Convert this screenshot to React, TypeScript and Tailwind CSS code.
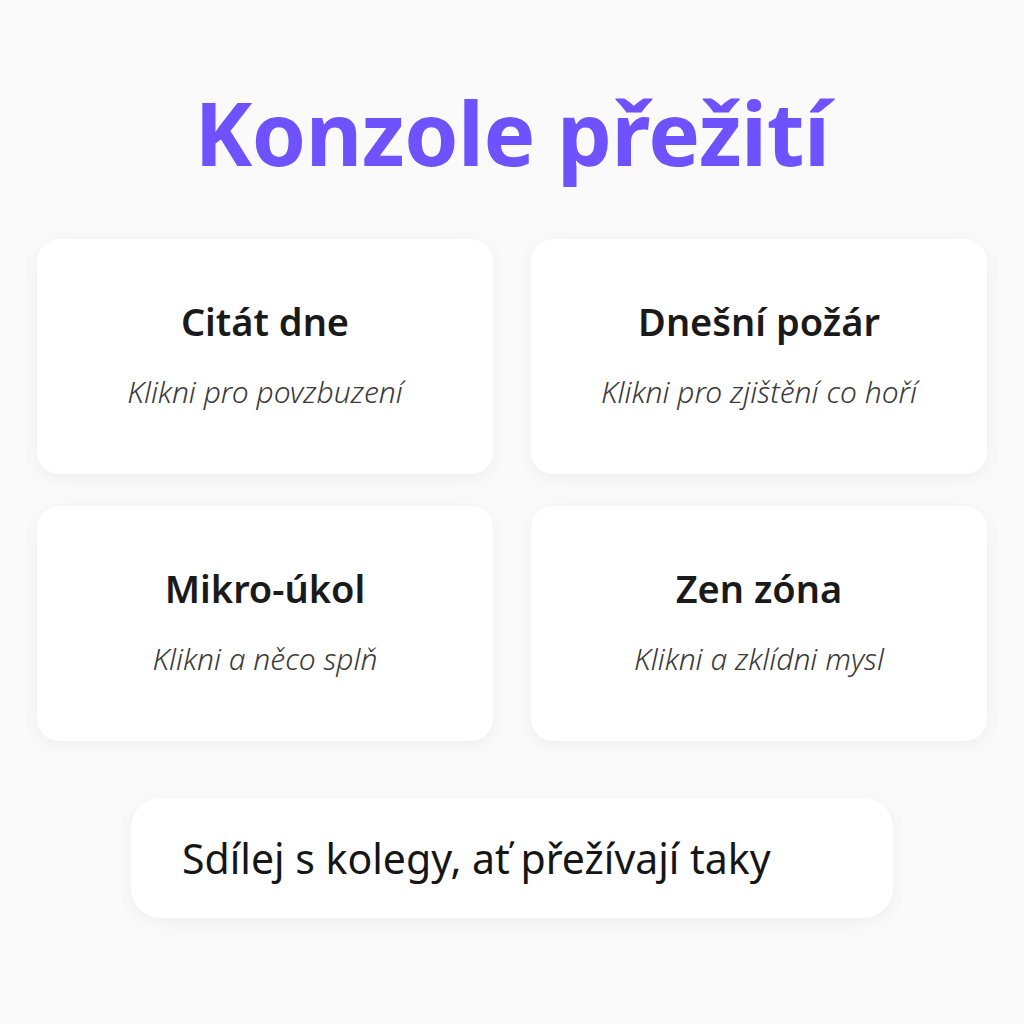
import React from "react";

const cards = [
  { title: "Citát dne", hint: "Klikni pro povzbuzení" },
  { title: "Dnešní požár", hint: "Klikni pro zjištění co hoří" },
  { title: "Mikro-úkol", hint: "Klikni a něco splň" },
  { title: "Zen zóna", hint: "Klikni a zklídni mysl" },
];

const Card = ({ title, hint }: { title: string; hint: string }) => (
  <button className="flex h-[235px] flex-col items-center justify-center rounded-[22px] bg-white pb-[4px] shadow-[0_4px_18px_rgba(0,0,0,0.05)]">
    <h2 className="text-[38px] leading-none font-semibold text-[#1a1a1a]">
      {title}
    </h2>
    <p className="mt-[37px] text-[30px] leading-none font-light text-[#3a3a3a] italic">
      {hint}
    </p>
  </button>
);

export default function App() {
  return (
    <div
      className="flex min-h-screen flex-col items-center bg-[#fafafa] pt-[82px]"
      style={{ fontFamily: '"Noto Sans", "Open Sans", sans-serif' }}
    >
      <h1 className="text-[87px] leading-[100px] font-bold tracking-[-0.5px] text-[#6e52fe]">
        Konzole přežití
      </h1>

      {/* card grid */}
      <div className="mt-[57px] grid w-full grid-cols-2 gap-x-[38px] gap-y-[32px] px-[37px]">
        {cards.map((c) => (
          <Card key={c.title} title={c.title} hint={c.hint} />
        ))}
      </div>

      <button className="mt-[57px] flex h-[120px] w-[762px] items-center rounded-[30px] bg-white px-[51px] text-left shadow-[0_4px_18px_rgba(0,0,0,0.05)]">
        <span className="text-[41px] leading-none text-[#161616]">
          Sdílej s kolegy, ať přežívají taky
        </span>
      </button>
    </div>
  );
}
